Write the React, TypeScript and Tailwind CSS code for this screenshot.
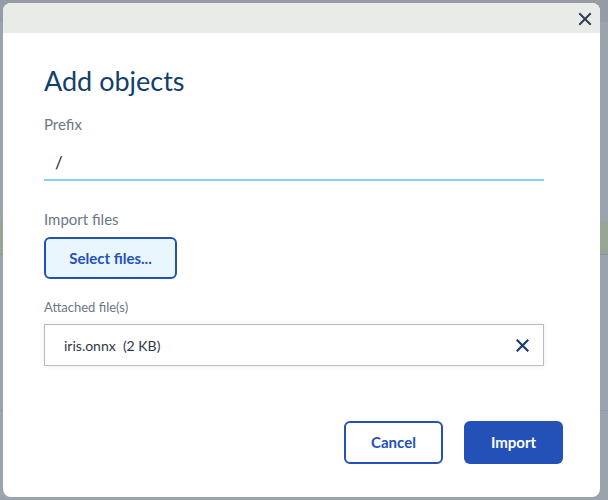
import React from "react";

export default function App() {
  return (
    <div className="relative w-[608px] h-[500px] overflow-hidden bg-[#9ca3ad]" style={{ fontFamily: "Lato, 'Noto Sans', sans-serif" }}>
      {/* dimmed page behind */}
      <div className="flex flex-col w-full h-full">
        <div className="h-[22px] bg-[#959ca6]" />
        <div className="h-[200px]" />
        <div className="h-[33px] bg-[#97a496] border-b border-[#8e959f]" />
        <div className="h-[155px]" />
        <div className="h-px bg-[#7c9fc0]" />
      </div>
      {/* dialog */}
      <div className="absolute left-[3px] top-[3px] w-[597px] h-[494px] rounded-[8px] bg-white overflow-hidden flex flex-col">
        <div className="h-[30px] bg-[#e9ebe9] flex items-center justify-end pr-[8px]">
          <svg width="14" height="14" viewBox="0 0 14 14" className="mt-[1px]">
            <path d="M2 2 L12 12 M12 2 L2 12" stroke="#2e3e52" strokeWidth="2" strokeLinecap="square" />
          </svg>
        </div>
        <div className="flex flex-col px-[41px] pt-[31px]">
          <h1 className="text-[27px] leading-[34px] text-[#123f6d]">Add objects</h1>
          <div className="mt-[16px] text-[15px] leading-[20px] text-[#6b7887]">Prefix</div>
          <div className="mt-[2px] w-[500px] h-[45px] border-b-2 border-[#80d3f5] pl-[11px] pt-[15px] text-[17px] leading-[24px] text-[#1f2937]">/</div>
          <div className="mt-[28px] text-[15px] leading-[20px] text-[#6b7887]">Import files</div>
          <div className="mt-[8px]">
            <button className="w-[133px] h-[42px] rounded-[6px] border-2 border-[#2351b8] bg-[#eaf6fd] text-[15px] font-bold text-[#2351b8]">Select files...</button>
          </div>
          <div className="mt-[19px] text-[13px] leading-[18px] text-[#6b7887]">Attached file(s)</div>
          <div className="mt-[8px] w-[500px] h-[42px] border border-[#b9bcc6] shadow-[0_0_6px_rgba(0,0,80,0.08)] flex items-center justify-between pl-[19px] pr-[14px]">
            <span className="text-[14px] text-[#2d3748]">iris.onnx&nbsp; (2 KB)</span>
            <svg width="13" height="13" viewBox="0 0 13 13">
              <path d="M1.5 1.5 L11.5 11.5 M11.5 1.5 L1.5 11.5" stroke="#1c3d66" strokeWidth="2.2" strokeLinecap="square" />
            </svg>
          </div>
          <div className="mt-[55px] flex justify-end gap-[21px] mr-[-4px]">
            <button className="w-[99px] h-[43px] rounded-[6px] border-2 border-[#2351b8] bg-white text-[15px] font-bold text-[#2351b8]">Cancel</button>
            <button className="w-[99px] h-[43px] rounded-[6px] bg-[#2351b8] text-[15px] font-bold text-white">Import</button>
          </div>
        </div>
      </div>
    </div>
  );
}
